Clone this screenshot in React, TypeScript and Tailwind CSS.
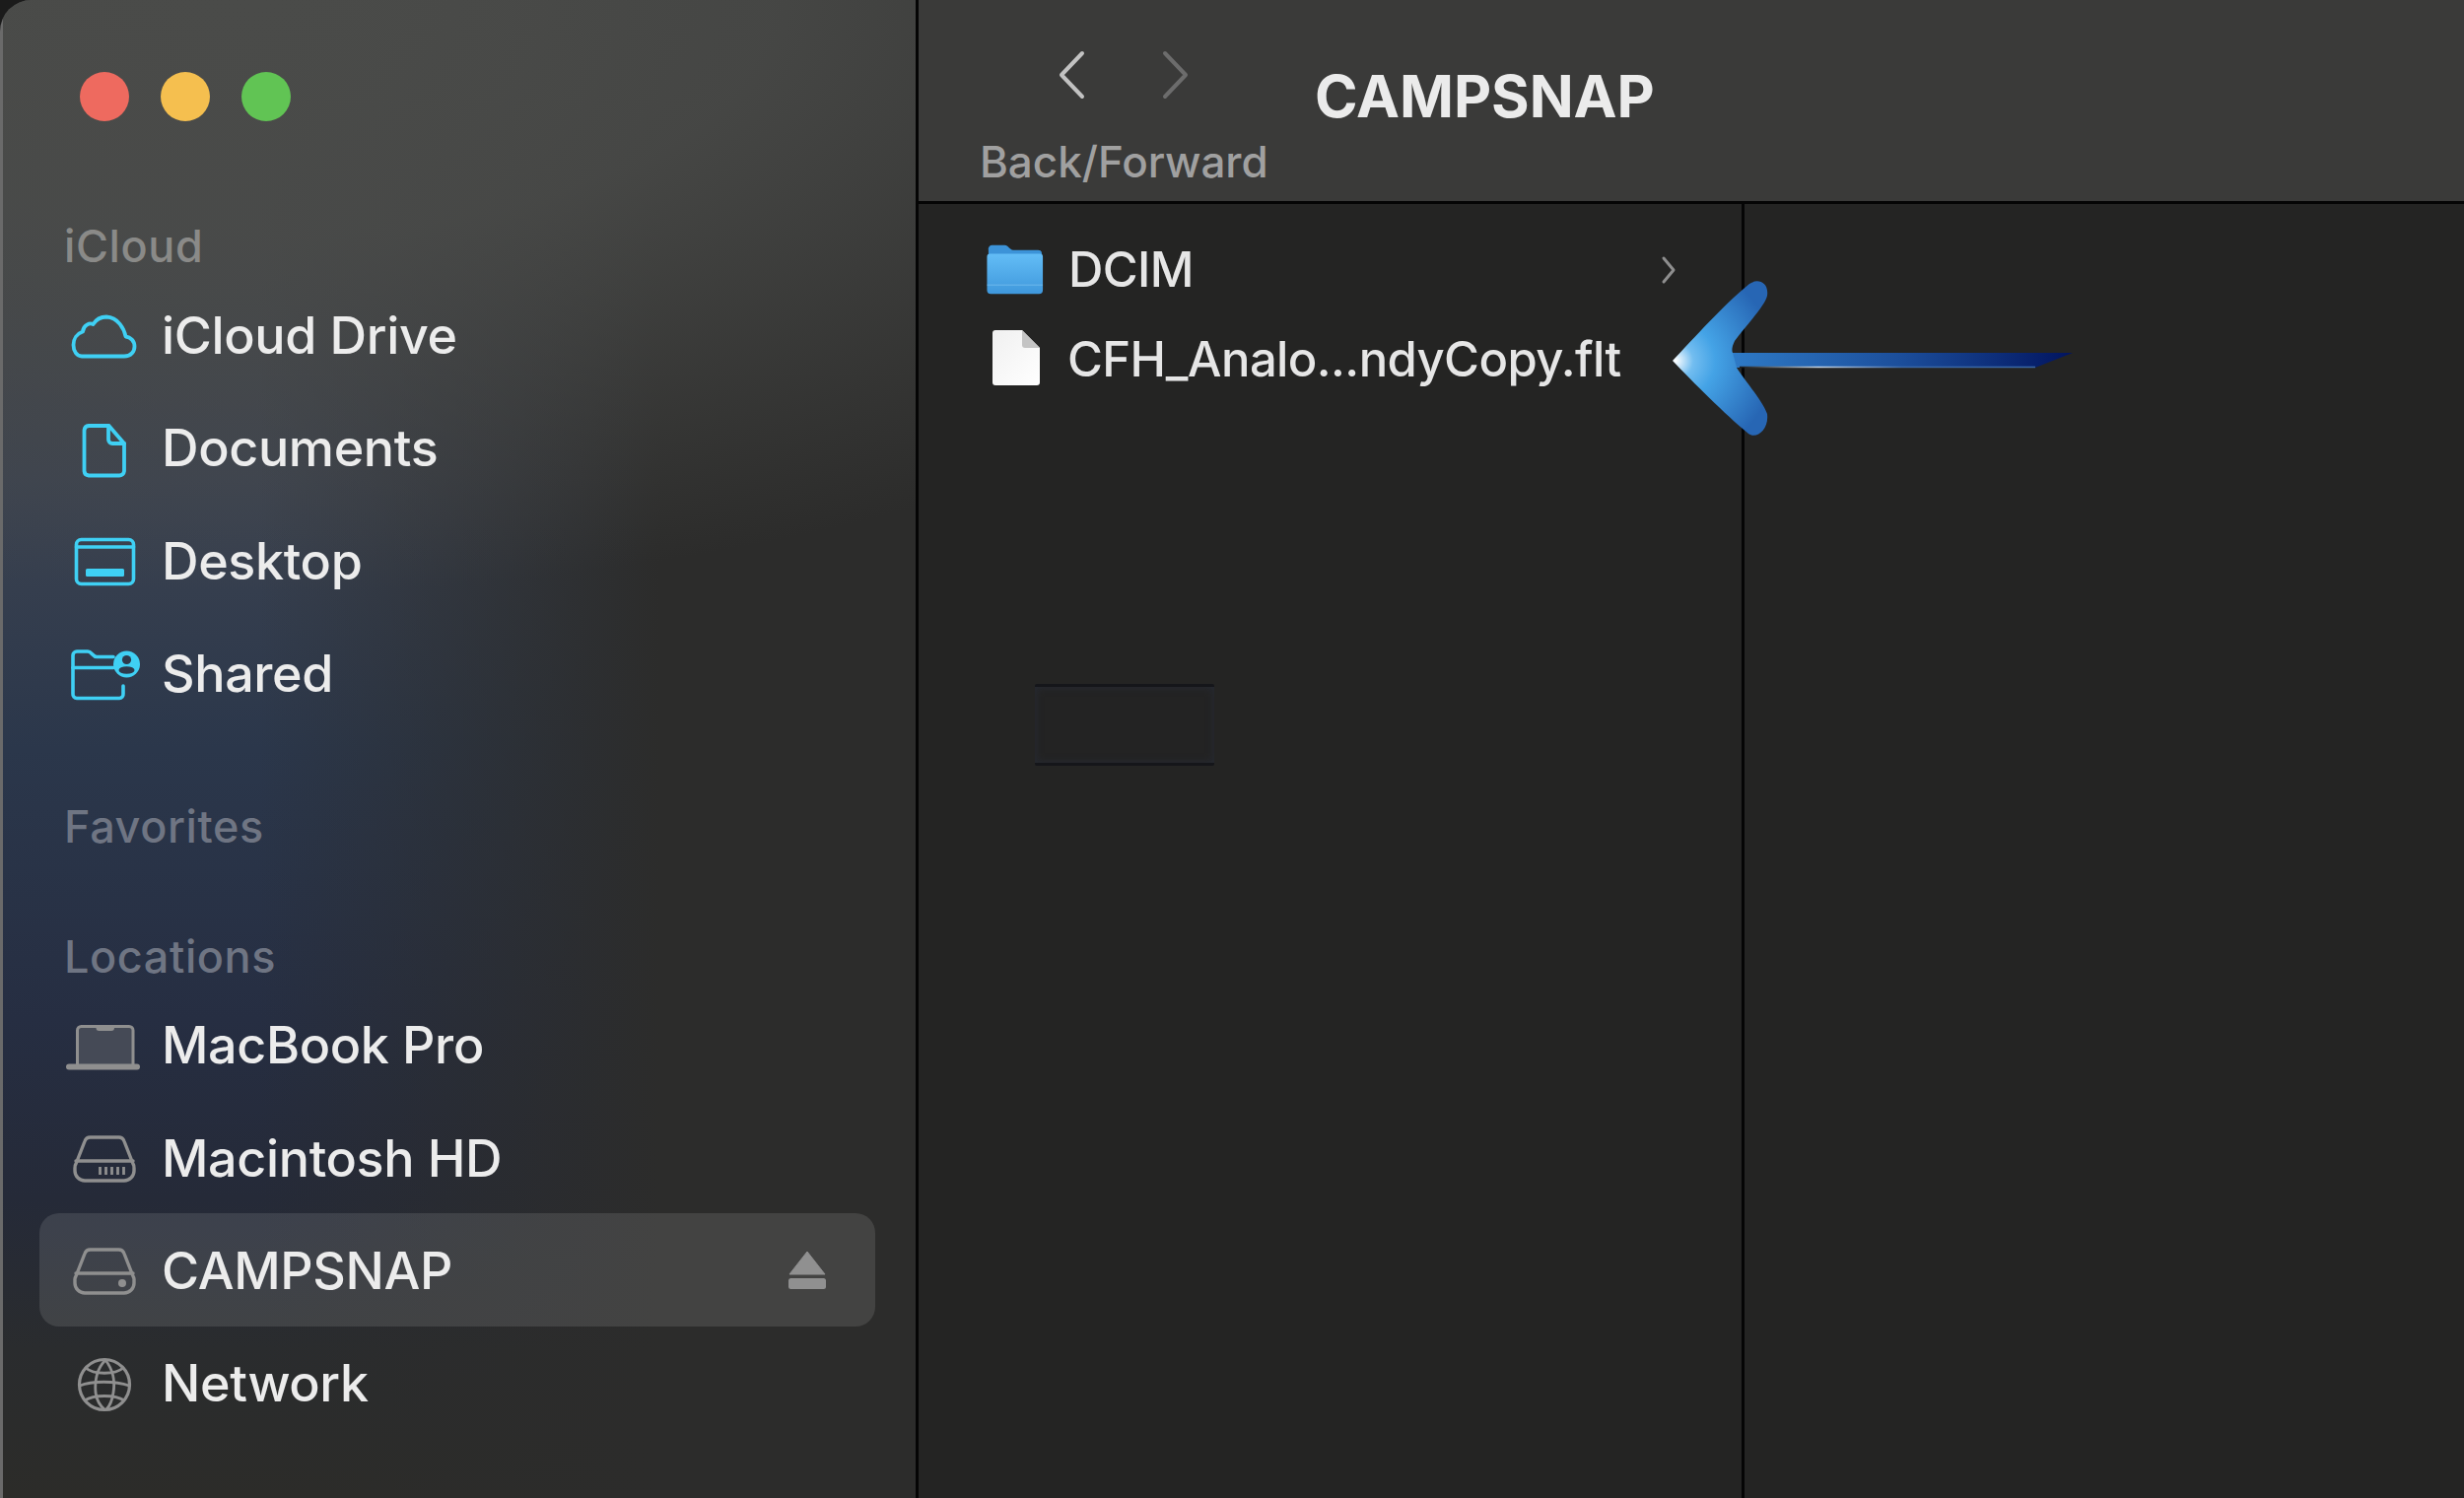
import React from "react";

const cyan = "#3fd0f4";
const gray = "#8f8f8f";

function Ico({ children }: { children: React.ReactNode }) {
  return (
    <svg width="80" height="60" viewBox="0 0 80 60" fill="none" strokeLinecap="round" strokeLinejoin="round" className="block">
      {children}
    </svg>
  );
}

const icons: Record<string, React.ReactNode> = {
  cloud: (
    <Ico>
      <path d="M18 49.5 H61 C68 49.5 71.5 44.5 71.5 39.5 C71.5 34 67.5 30 62.5 29.5 C61 22 55 10 43 9.5 C36 9.5 32 13 29.5 17 C26 15.5 19.5 17.5 19 24.5 C13 26.5 9.5 32 9.5 38 C9.5 44.5 13 49.5 18 49.5 Z" stroke={cyan} strokeWidth="3.8" />
    </Ico>
  ),
  doc: (
    <Ico>
      <path d="M25 6 H45.5 L61 24 V52 A5 5 0 0 1 56 56.5 H25 A5 5 0 0 1 20.5 52 V10.5 A5 5 0 0 1 25 6 Z" stroke={cyan} strokeWidth="3.8" />
      <path d="M45 6 V20 A4 4 0 0 0 49 24 H61" stroke={cyan} strokeWidth="3.8" />
    </Ico>
  ),
  desktop: (
    <Ico>
      <rect x="12.5" y="7.5" width="58" height="45" rx="5" stroke={cyan} strokeWidth="3.6" />
      <path d="M12.5 15 H70.5" stroke={cyan} strokeWidth="3.6" />
      <rect x="22" y="37" width="39" height="8" rx="1.5" fill={cyan} />
    </Ico>
  ),
  shared: (
    <Ico>
      <path d="M60 42 V50 A4 4 0 0 1 56 54.5 H13 A4 4 0 0 1 9 50 V11 A4 4 0 0 1 13 7 H24 C28 7 29 12.5 33 12.5 H50" stroke={cyan} strokeWidth="3.6" />
      <path d="M9 23.5 H50" stroke={cyan} strokeWidth="3.6" />
      <circle cx="63.5" cy="20" r="13.5" fill={cyan} />
      <circle cx="63.5" cy="15.5" r="4.6" fill="#2e3a4c" />
      <ellipse cx="63.5" cy="26" rx="8" ry="3.8" fill="#2e3a4c" />
    </Ico>
  ),
  laptop: (
    <Ico>
      <path d="M13.5 50 V13.5 A4 4 0 0 1 17.5 9.5 H66 A4 4 0 0 1 70 13.5 V50 Z" fill="#454a56" stroke={gray} strokeWidth="3" />
      <path d="M32.5 9.5 H51 V11 A3 3 0 0 1 48 14 H35.5 A3 3 0 0 1 32.5 11 Z" fill={gray} />
      <rect x="2" y="47.5" width="75" height="6" rx="3" fill={gray} />
    </Ico>
  ),
  hd: (
    <Ico>
      <path d="M27 8 H55 A6 6 0 0 1 61 12 L70 35 A6 6 0 0 1 71 39 V42 A10 10 0 0 1 61 52 H21 A10 10 0 0 1 11 42 V39 A6 6 0 0 1 12 35 L21 12 A6 6 0 0 1 27 8 Z" stroke={gray} strokeWidth="3.4" />
      <path d="M12 32 H70" stroke={gray} strokeWidth="3.4" />
      <path d="M36.5 38 V46 M42.5 38 V46 M48.5 38 V46 M54.5 38 V46 M60.5 38 V46" stroke={gray} strokeWidth="2.8" strokeLinecap="butt" />
    </Ico>
  ),
  disk: (
    <Ico>
      <path d="M27 8 H55 A6 6 0 0 1 61 12 L70 35 A6 6 0 0 1 71 39 V42 A10 10 0 0 1 61 52 H21 A10 10 0 0 1 11 42 V39 A6 6 0 0 1 12 35 L21 12 A6 6 0 0 1 27 8 Z" stroke={gray} strokeWidth="3.4" />
      <path d="M12 32 H70" stroke={gray} strokeWidth="3.4" />
      <circle cx="59" cy="42" r="4" fill={gray} />
    </Ico>
  ),
  globe: (
    <Ico>
      <circle cx="41" cy="30" r="25.5" stroke={gray} strokeWidth="3.2" />
      <path d="M42 5 C33 14 31 26 32 38 C33 45 36 51 41 55 M42 5 C49 14 52 26 50 38 C49 45 47 51 43 55" stroke={gray} strokeWidth="2.8" />
      <path d="M22 13 C30 20 52 20 60 13 M16 31 C28 26 52 26 66 31 M21 46 C30 40 52 40 61 46" stroke={gray} strokeWidth="2.8" />
    </Ico>
  ),
};

function Header({ children, className }: { children: React.ReactNode; className: string }) {
  return (
    <div className={`h-[50px] pl-[62px] flex items-center text-[45px] font-medium tracking-[0.6px] ${className}`}>
      {children}
    </div>
  );
}

function Row({ icon, label, selected }: { icon: string; label: string; selected?: boolean }) {
  return (
    <div className="h-[114.33px] flex items-start">
      <div className={`ml-[37px] mr-[41px] h-[115px] -mt-[2px] flex-1 flex items-center rounded-[20px] ${selected ? "bg-[#ffffff1c]" : ""}`}>
        <div className="w-[124px] pl-[25px] pt-[4px] shrink-0">{icons[icon]}</div>
        <span className="flex-1 pt-[3px] text-[52px] leading-[60px] font-[450] tracking-[-0.35px] text-[#ececec]">{label}</span>
        {selected && (
          <svg width="40" height="40" viewBox="0 0 40 40" className="mr-[49px] mt-[2px] block">
            <path d="M20 1 L38 24 H2 Z" fill="#909090" strokeLinejoin="round" stroke="#909090" strokeWidth="1" />
            <rect x="1" y="28" width="38" height="11" rx="2.5" fill="#909090" />
          </svg>
        )}
      </div>
    </div>
  );
}

function Chevron({ dir, color }: { dir: "l" | "r"; color: string }) {
  return (
    <svg width="30" height="50" viewBox="0 0 30 50" fill="none" className="block">
      <path d={dir === "l" ? "M26 3 L5 25 L26 47" : "M4 3 L25 25 L4 47"} stroke={color} strokeWidth="4" strokeLinecap="round" strokeLinejoin="round" />
    </svg>
  );
}

export default function App() {
  return (
    <div className="w-[2500px] h-[1520px] overflow-hidden bg-[#1b1b1b] relative font-['Inter','Liberation_Sans',sans-serif]">
      <div className="w-full h-full flex rounded-tl-[32px] overflow-hidden">
        {/* Sidebar */}
        <aside className="w-[929px] h-full shrink-0 flex flex-col border-l-[3px] border-[#6a6a6a] bg-[radial-gradient(ellipse_1300px_600px_at_260px_0px,#4a4b49_0%,#4a4b49d9_40%,#4a4b4900_100%),linear-gradient(90deg,#2c2c2b00_28%,#2c2c2b_72%),linear-gradient(180deg,#454644_0%,#3c4350_32%,#2b374b_50%,#262e42_68%,#252a38_80%,#2a2c2e_90%,#2c2c29_100%)]">
          <div className="pt-[73px] pl-[78px] flex gap-[32px]">
            <div className="w-[50px] h-[50px] rounded-full bg-[#ee6a5f]" />
            <div className="w-[50px] h-[50px] rounded-full bg-[#f5bf4f]" />
            <div className="w-[50px] h-[50px] rounded-full bg-[#61c454]" />
          </div>
          <Header className="mt-[102px] text-[#8a8a88]">iCloud</Header>
          <div className="mt-[9px]">
            <Row icon="cloud" label="iCloud Drive" />
            <Row icon="doc" label="Documents" />
            <Row icon="desktop" label="Desktop" />
            <Row icon="shared" label="Shared" />
          </div>
          <Header className="mt-[72px] text-[#6f7583]">Favorites</Header>
          <Header className="mt-[82px] text-[#6f7583]">Locations</Header>
          <div className="mt-[9px]">
            <Row icon="laptop" label="MacBook Pro" />
            <Row icon="hd" label="Macintosh HD" />
            <Row icon="disk" label="CAMPSNAP" selected />
            <Row icon="globe" label="Network" />
          </div>
        </aside>

        <div className="w-[3px] h-full bg-[#050505] shrink-0" />

        {/* Main */}
        <main className="flex-1 h-full flex flex-col bg-[#242423]">
          <header className="h-[204px] shrink-0 bg-[#3a3a39] flex">
            <div className="w-[402px] pl-[62px] pt-[51px]">
              <div className="flex gap-[76px] pl-[78px]">
                <Chevron dir="l" color="#c2c2c2" />
                <Chevron dir="r" color="#6c6c6c" />
              </div>
              <div className="mt-[38px] text-[44px] leading-[50px] tracking-[-0.05px] font-[450] text-[#a0a0a0] whitespace-nowrap">Back/Forward</div>
            </div>
            <div className="pt-[63px] text-[59px] leading-[70px] font-bold tracking-[-0.05px] text-[#ebebeb]">CAMPSNAP</div>
          </header>
          <div className="h-[3px] shrink-0 bg-[#050505]" />
          <div className="flex-1 flex">
            <div className="w-[835px] shrink-0 pt-[21px] flex flex-col relative">
              <div className="h-[91px] pl-[68px] flex items-center">
                <svg width="60" height="56" viewBox="0 0 62 56" className="block shrink-0 -mt-[2px]">
                  <defs>
                    <linearGradient id="fold" x1="0" y1="0" x2="0" y2="1">
                      <stop offset="0" stopColor="#63bdf6" />
                      <stop offset="1" stopColor="#3f98dc" />
                    </linearGradient>
                  </defs>
                  <path d="M3 8 A4 4 0 0 1 7 3 H20 C24 3 25 8 29 8 H55 A4 4 0 0 1 59 12 V20 H3 Z" fill="#3c93d8" />
                  <path d="M1.5 15 A3 3 0 0 1 4.5 12 H57 A3 3 0 0 1 60 15 V50 A4 4 0 0 1 56 54 H5.5 A4 4 0 0 1 1.5 50 Z" fill="url(#fold)" />
                  <rect x="1.5" y="44" width="58.5" height="1.5" fill="#7cc4f2" opacity="0.5" />
                </svg>
                <span className="ml-[24px] flex-1 text-[49px] leading-[60px] font-[450] tracking-[-0.6px] text-[#e6e6e6]">DCIM</span>
                <svg width="16" height="30" viewBox="0 0 16 30" fill="none" className="mr-[66px] block">
                  <path d="M3 3 L13 15 L3 27" stroke="#8e8e8e" strokeWidth="3" strokeLinecap="round" strokeLinejoin="round" />
                </svg>
              </div>
              <div className="h-[91px] pl-[74px] flex items-center">
                <svg width="50" height="58" viewBox="0 0 50 58" className="block shrink-0 -mt-[4px]">
                  <defs>
                    <linearGradient id="page" x1="0" y1="0" x2="1" y2="1">
                      <stop offset="0" stopColor="#f0f0f0" />
                      <stop offset="1" stopColor="#ffffff" />
                    </linearGradient>
                  </defs>
                  <path d="M4 1 H31 L49 19 V54 A3 3 0 0 1 46 57 H4 A3 3 0 0 1 1 54 V4 A3 3 0 0 1 4 1 Z" fill="url(#page)" />
                  <path d="M31 1 V16 A3 3 0 0 0 34 19 H49 Z" fill="#c4c4c4" />
                </svg>
                <span className="ml-[27px] text-[49px] leading-[60px] font-[450] tracking-[-0.6px] text-[#e6e6e6] whitespace-nowrap">CFH_Analo...ndyCopy.flt</span>
              </div>
              <div className="absolute left-[118px] top-[487px] w-[182px] h-[83px] bg-[#232323] border-y-[3px] border-[#15161a] rounded-[2px] shadow-[inset_0_0_8px_#272b35]" />
            </div>
            <div className="w-[3px] bg-[#050505] shrink-0" />
            <div className="flex-1" />
          </div>
        </main>
      </div>

      {/* Annotation arrow laid over the window */}
      <svg width="420" height="170" viewBox="0 0 420 170" className="absolute left-[1690px] top-[280px] block">
        <defs>
          <radialGradient id="head" gradientUnits="userSpaceOnUse" cx="10" cy="86" r="100">
            <stop offset="0" stopColor="#ffffff" />
            <stop offset="0.18" stopColor="#72bdf0" />
            <stop offset="0.4" stopColor="#44a3e6" />
            <stop offset="1" stopColor="#2766b4" />
          </radialGradient>
          <linearGradient id="shaft" gradientUnits="userSpaceOnUse" x1="60" y1="0" x2="410" y2="0">
            <stop offset="0" stopColor="#2f7cc8" />
            <stop offset="0.5" stopColor="#1c4f9c" />
            <stop offset="1" stopColor="#021560" />
          </linearGradient>
          <linearGradient id="glint" gradientUnits="userSpaceOnUse" x1="70" y1="0" x2="240" y2="0">
            <stop offset="0" stopColor="#111111" />
            <stop offset="0.5" stopColor="#c8d8e8" />
            <stop offset="1" stopColor="#3a68a8" />
          </linearGradient>
        </defs>
        <path d="M68 78 H413 L375 93 H68 Z" fill="url(#shaft)" />
        <path d="M75 92.5 H375" stroke="url(#glint)" strokeWidth="1.5" />
        <path d="M7 86 C28 64 60 28 85 8 C93 2 105 6 103 20 C101 30 82 50 70 66 C67 72 67 76 68 78 L72 93 C80 106 98 126 103 140 C105 156 92 166 84 160 C60 140 28 108 7 86 Z" fill="url(#head)" />
      </svg>
    </div>
  );
}
